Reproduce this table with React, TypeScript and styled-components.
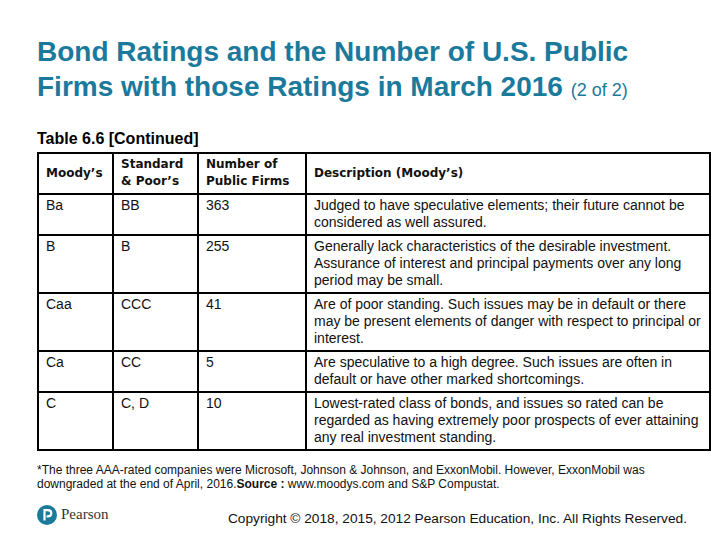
import React from "react";
import styled, { createGlobalStyle } from "styled-components";

const Global = createGlobalStyle`
  html, body { margin: 0; padding: 0; background: #fff; }
  body { font-family: "Liberation Sans", Arial, sans-serif; color: #000; }
`;

const Page = styled.div`
  width: 720px;
  height: 540px;
  box-sizing: border-box;
  padding: 34px 9px 0 37px;
  display: flex;
  flex-direction: column;
  overflow: hidden;
`;

const Title = styled.h1`
  margin: 0;
  font-size: 28px;
  line-height: 35px;
  font-weight: bold;
  color: #1b7a9c;
`;

const Small = styled.span`
  font-size: 18px;
  font-weight: normal;
`;

const Caption = styled.div`
  margin-top: 21px;
  font-size: 16px;
  font-weight: bold;
  line-height: 20px;
`;

const Table = styled.table`
  margin-top: 3px;
  width: 674px;
  border-collapse: collapse;
  border: 2px solid #000;
  table-layout: fixed;
`;

const Cell = styled.td<{ $head?: boolean }>`
  border: 2px solid #000;
  padding: 2px 6px 3px 7px;
  text-align: left;
  vertical-align: ${(p) => (p.$head ? "middle" : "top")};
  font-family: ${(p) => (p.$head ? '"DejaVu Sans", Verdana, sans-serif' : '"Liberation Sans", Arial, sans-serif')};
  font-weight: ${(p) => (p.$head ? "bold" : "normal")};
  font-size: ${(p) => (p.$head ? "12px" : "14px")};
  line-height: 17px;
  color: #111;
`;

const Foot = styled.div`
  margin-top: 12px;
  font-size: 12px;
  line-height: 14px;
  color: #111;
`;

const Bottom = styled.div`
  margin-top: 12px;
  display: flex;
  align-items: center;
  justify-content: space-between;
`;

const Logo = styled.div`
  display: flex;
  align-items: center;
  gap: 4px;
  font-family: "Liberation Serif", serif;
  font-size: 15px;
  color: #333;
`;

const Copy = styled.div`
  font-size: 13.7px;
  color: #111;
  padding: 8px 24px 0 0;
`;

const rows = [
  ["Ba", "BB", "363", "Judged to have speculative elements; their future cannot be considered as well assured."],
  ["B", "B", "255", "Generally lack characteristics of the desirable investment. Assurance of interest and principal payments over any long period may be small."],
  ["Caa", "CCC", "41", "Are of poor standing. Such issues may be in default or there may be present elements of danger with respect to principal or interest."],
  ["Ca", "CC", "5", "Are speculative to a high degree. Such issues are often in default or have other marked shortcomings."],
  ["C", "C, D", "10", "Lowest-rated class of bonds, and issues so rated can be regarded as having extremely poor prospects of ever attaining any real investment standing."],
];

export default function App() {
  return (
    <Page>
      <Global />
      <Title>
        Bond Ratings and the Number of U.S. Public
        <br />
        Firms with those Ratings in March 2016 <Small>(2 of 2)</Small>
      </Title>
      <Caption>Table 6.6 [Continued]</Caption>
      <Table>
        <colgroup>
          <col style={{ width: 75 }} />
          <col style={{ width: 85 }} />
          <col style={{ width: 108 }} />
          <col />
        </colgroup>
        <thead>
          <tr>
            <Cell $head as="th">Moody’s</Cell>
            <Cell $head as="th">Standard &amp; Poor’s</Cell>
            <Cell $head as="th">Number of Public Firms</Cell>
            <Cell $head as="th">Description (Moody’s)</Cell>
          </tr>
        </thead>
        <tbody>
          {rows.map((r) => (
            <tr key={r[0]}>
              {r.map((c, i) => (
                <Cell key={i}>{c}</Cell>
              ))}
            </tr>
          ))}
        </tbody>
      </Table>
      <Foot>
        *The three AAA-rated companies were Microsoft, Johnson &amp; Johnson, and ExxonMobil. However, ExxonMobil was
        <br />
        downgraded at the end of April, 2016.<b>Source :</b> www.moodys.com and S&amp;P Compustat.
      </Foot>
      <Bottom>
        <Logo>
          <svg width="20" height="20" viewBox="0 0 20 20">
            <circle cx="10" cy="10" r="10" fill="#1b7a9c" />
            <path d="M7.5 15.5V5.2h3.2c2.2 0 3.6 1.2 3.6 3.1s-1.4 3.1-3.6 3.1H9.6" stroke="#fff" strokeWidth="2.2" fill="none" />
          </svg>
          Pearson
        </Logo>
        <Copy>Copyright © 2018, 2015, 2012 Pearson Education, Inc. All Rights Reserved.</Copy>
      </Bottom>
    </Page>
  );
}
